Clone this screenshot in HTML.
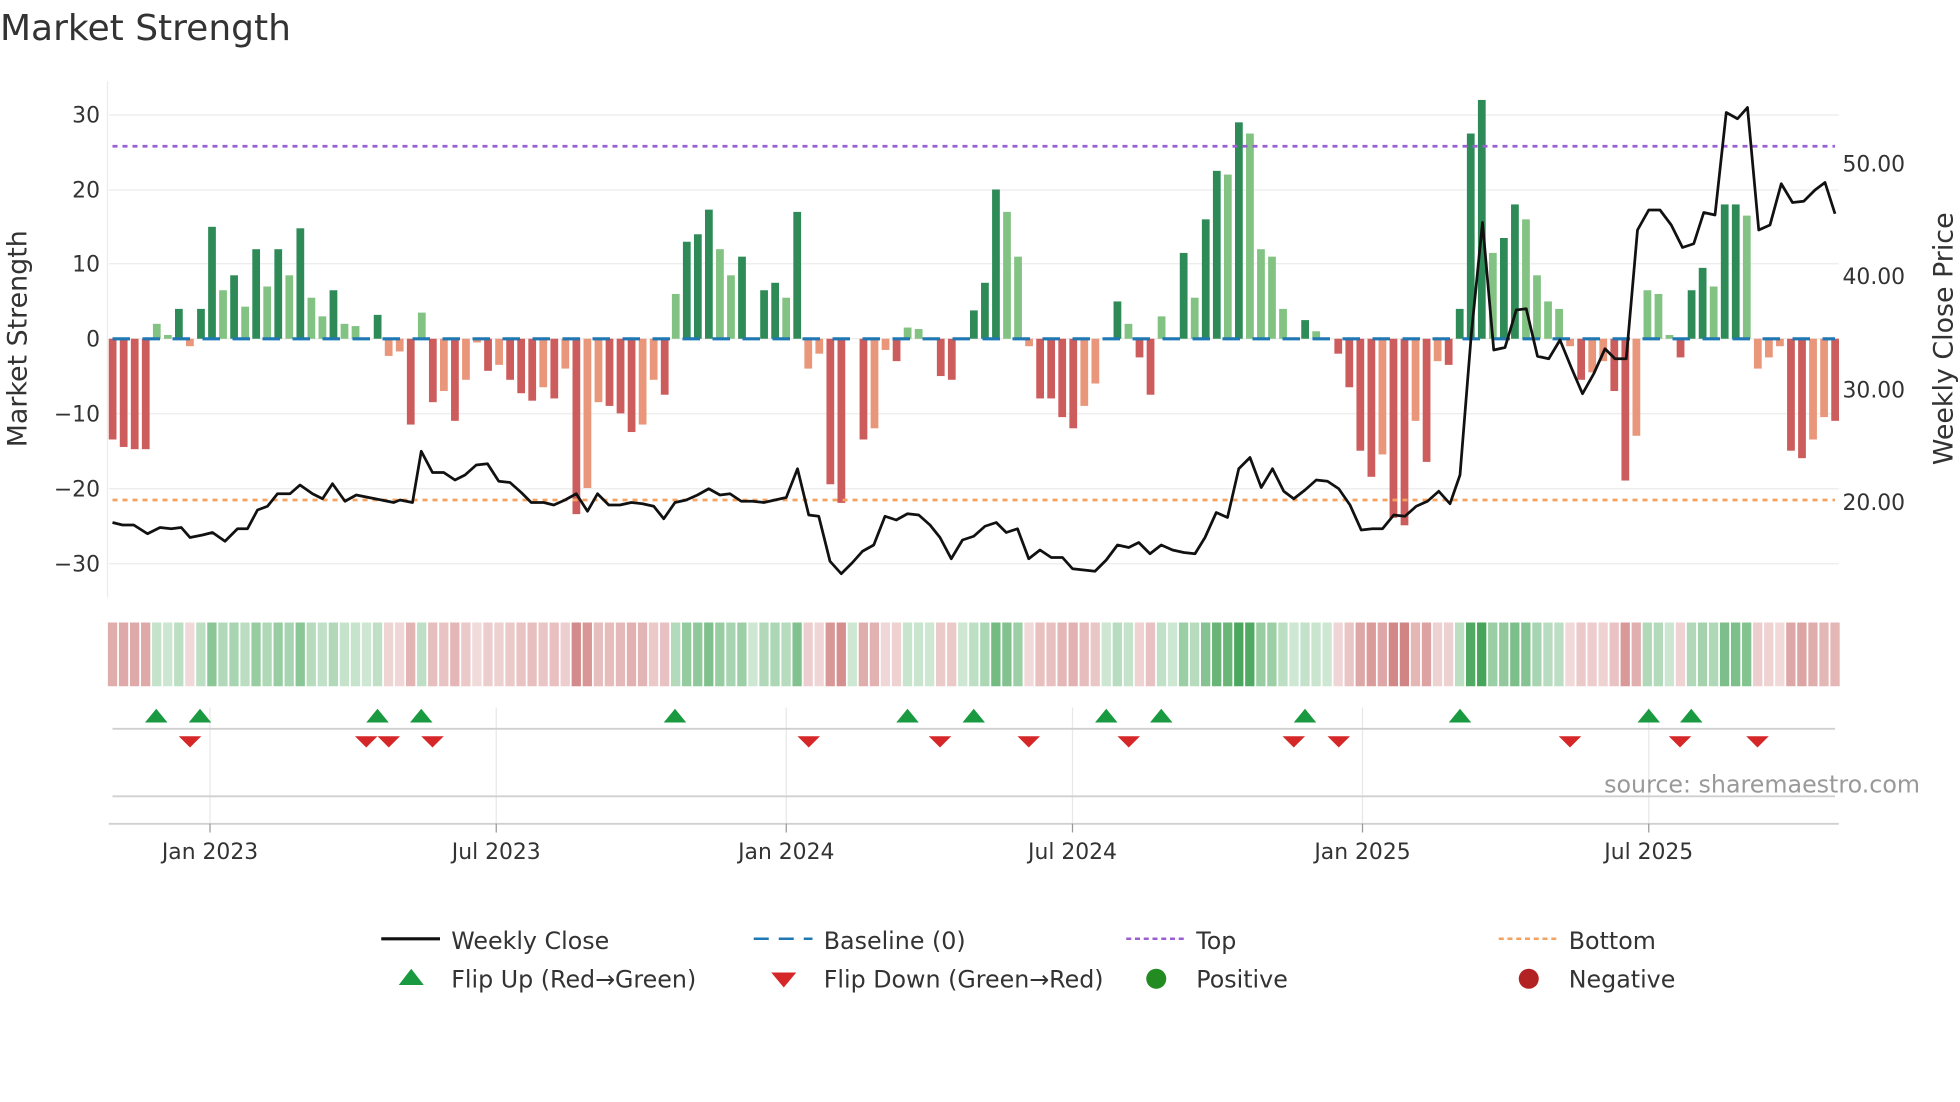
<!DOCTYPE html>
<html><head><meta charset="utf-8"><style>
html,body{margin:0;padding:0;background:#fff;width:1960px;height:1102px;overflow:hidden}
svg{display:block}
text{font-family:"DejaVu Sans","Liberation Sans",sans-serif;fill:#333}
</style></head><body>
<svg id="s" width="1960" height="1102" viewBox="0 0 1568 881.6" xmlns="http://www.w3.org/2000/svg">
<text x="0" y="32" font-size="28.8">Market Strength</text>
<g stroke="#ececec" stroke-width="1">
<line x1="87" x2="1471" y1="92" y2="92"/><line x1="87" x2="1471" y1="152" y2="152"/><line x1="87" x2="1471" y1="211" y2="211"/><line x1="87" x2="1471" y1="271" y2="271"/><line x1="87" x2="1471" y1="331" y2="331"/><line x1="87" x2="1471" y1="391" y2="391"/><line x1="87" x2="1471" y1="451" y2="451"/>
<line x1="86" x2="86" y1="65" y2="478"/>
</g>
<g font-size="17.5" text-anchor="end">
<text x="80" y="98">30</text><text x="80" y="158">20</text><text x="80" y="217">10</text><text x="80" y="277">0</text><text x="80" y="337">−10</text><text x="80" y="397">−20</text><text x="80" y="457">−30</text>
</g>
<g font-size="17.5">
<text x="1474" y="137">50.00</text><text x="1474" y="227">40.00</text><text x="1474" y="318">30.00</text><text x="1474" y="408">20.00</text>
</g>
<text font-size="21.5" transform="translate(21,271) rotate(-90)" text-anchor="middle">Market Strength</text>
<text font-size="21.5" transform="translate(1562,271) rotate(-90)" text-anchor="middle">Weekly Close Price</text>
<g id="bars"></g>
<line x1="90" x2="1468" y1="271" y2="271" stroke="#1f77b4" stroke-width="2.5" stroke-dasharray="14 10"/>
<line x1="90" x2="1468" y1="117" y2="117" stroke="#9b5fd4" stroke-width="2.2" stroke-dasharray="4 4"/>
<line x1="90" x2="1468" y1="400" y2="400" stroke="#f4a261" stroke-width="2.2" stroke-dasharray="4 4"/>
<polyline fill="none" stroke="#111" stroke-width="2.2" stroke-linejoin="round" points="90,418 98,420 107,420 118,427 128,422 137,423 145,422 152,430 162,428 170,426 180,433 190,423 198,423 206,408 214,405 222,395 232,395 240,388 250,395 258,399 266,387 276,401 285,396 300,399 315,402 320,400 330,402 337,361 346,378 355,378 364,384 372,380 381,372 390,371 399,385 408,386 417,394 425,402 435,402 443,404 452,400 461,395 470,409 478,395 487,404 496,404 505,402 514,403 523,405 531,415 540,402 549,400 558,396 567,391 576,396 584,395 593,401 602,401 611,402 620,400 629,398 638,375 647,412 655,413 664,449 673,459 682,450 690,441 699,436 708,413 717,416 726,411 735,412 744,420 752,430 761,447 770,432 779,429 788,421 797,418 805,426 814,423 823,447 832,440 841,446 850,446 858,455 867,456 876,457 885,448 894,436 903,438 911,434 920,443 929,436 938,440 947,442 956,443 964,430 973,410 982,414 991,375 1000,366 1009,390 1018,375 1027,393 1035,399 1044,392 1053,384 1062,385 1071,391 1080,404 1089,424 1098,423 1106,423 1115,412 1124,413 1133,405 1142,401 1151,393 1160,403 1168,380 1177,268 1186,178 1195,280 1204,278 1213,248 1221,247 1230,285 1239,287 1248,272 1257,294 1266,315 1275,299 1284,279 1292,287 1301,287 1310,184 1319,168 1328,168 1337,180 1346,198 1355,195 1363,170 1372,172 1381,90 1390,95 1398,86 1407,184 1416,180 1425,147 1434,162 1443,161 1452,152 1460,146 1468,171"/>
<g id="heat"></g>
<g stroke="#e8e8e8" stroke-width="1">
<line x1="168" x2="168" y1="566" y2="659"/><line x1="397" x2="397" y1="566" y2="659"/><line x1="629" x2="629" y1="566" y2="659"/><line x1="858" x2="858" y1="566" y2="659"/><line x1="1090" x2="1090" y1="566" y2="659"/><line x1="1319" x2="1319" y1="566" y2="659"/>
</g>
<g stroke="#d0d0d0" stroke-width="1.5">
<line x1="90" x2="1468" y1="583" y2="583"/><line x1="90" x2="1468" y1="637" y2="637"/><line x1="87" x2="1471" y1="659" y2="659"/>
</g>
<g stroke="#999" stroke-width="1">
<line x1="168" x2="168" y1="659" y2="666"/><line x1="397" x2="397" y1="659" y2="666"/><line x1="629" x2="629" y1="659" y2="666"/><line x1="858" x2="858" y1="659" y2="666"/><line x1="1090" x2="1090" y1="659" y2="666"/><line x1="1319" x2="1319" y1="659" y2="666"/>
</g>
<g id="tri"></g>
<text x="1536" y="634" font-size="19" text-anchor="end" style="fill:#999">source: sharemaestro.com</text>
<g font-size="17.5" text-anchor="middle">
<text x="168" y="687">Jan 2023</text><text x="397" y="687">Jul 2023</text><text x="629" y="687">Jan 2024</text><text x="858" y="687">Jul 2024</text><text x="1090" y="687">Jan 2025</text><text x="1319" y="687">Jul 2025</text>
</g>
<g font-size="19">
<line x1="305" x2="352" y1="751" y2="751" stroke="#111" stroke-width="2.5"/>
<text x="361" y="759">Weekly Close</text>
<line x1="603" x2="650" y1="751" y2="751" stroke="#1f77b4" stroke-width="2" stroke-dasharray="12 8"/>
<text x="659" y="759">Baseline (0)</text>
<line x1="901" x2="948" y1="751" y2="751" stroke="#9b5fd4" stroke-width="2" stroke-dasharray="4 3"/>
<text x="957" y="759">Top</text>
<line x1="1199" x2="1246" y1="751" y2="751" stroke="#f4a261" stroke-width="2" stroke-dasharray="4 3"/>
<text x="1255" y="759">Bottom</text>
<polygon points="319,788 329,775 339,788" fill="#1a9a40"/>
<text x="361" y="790">Flip Up (Red→Green)</text>
<polygon points="617,778 637,778 627,790" fill="#d62728"/>
<text x="659" y="790">Flip Down (Green→Red)</text>
<circle cx="925" cy="783" r="8" fill="#228b22"/>
<text x="957" y="790">Positive</text>
<circle cx="1223" cy="783" r="8" fill="#b22222"/>
<text x="1255" y="790">Negative</text>
</g>
</svg>
<script>
var v=[-13.5,-14.5,-14.8,-14.8,2,0.5,4,-1,4,15,6.5,8.5,4.3,12,7,12,8.5,14.8,5.5,3,6.5,2,1.7,0,3.2,-2.3,-1.7,-11.5,3.5,-8.5,-7,-11,-5.5,-0.5,-4.3,-3.5,-5.5,-7.3,-8.3,-6.5,-8,-4,-23.5,-20,-8.5,-9,-10,-12.5,-11.5,-5.5,-7.5,6,13,14,17.3,12,8.5,11,0,6.5,7.5,5.5,17,-4,-2,-19.5,-22,0,-13.5,-12,-1.5,-3,1.5,1.3,0,-5,-5.5,0,3.8,7.5,20,17,11,-1,-8,-8,-10.5,-12,-9,-6,0,5,2,-2.5,-7.5,3,0,11.5,5.5,16,22.5,22,29,27.5,12,11,4,0,2.5,1,0,-2,-6.5,-15,-18.5,-15.5,-24,-25,-11,-16.5,-3,-3.5,4,27.5,32,11.5,13.5,18,16,8.5,5,4,-1,-5.5,-4.5,-3,-7,-19,-13,6.5,6,0.5,-2.5,6.5,9.5,7,18,18,16.5,-4,-2.5,-1,-15,-16,-13.5,-10.5,-11];
var ns="http://www.w3.org/2000/svg",n=v.length,dx=(1468-90)/(n-1);
function el(t,a,p){var e=document.createElementNS(ns,t);for(var k in a)e.setAttribute(k,a[k]);p.appendChild(e);}
var B=document.getElementById('bars'),H=document.getElementById('heat');
for(var i=0;i<n;i++){var x=90+i*dx,val=v[i],prev=i?v[i-1]:0,h=Math.abs(val)*5.97;
var up=Math.abs(val)>=Math.abs(prev);
var c=val>=0?(up?'#2e8b57':'#82c282'):(up?'#cd5c5c':'#e9967a');
if(h>0.3)el('rect',{x:x-3,y:val>=0?271-h:271,width:6.2,height:h,fill:c},B);
var t=Math.min(Math.abs(val)/30,1),hc;
if(val>=0){var a=0.25+0.7*t;hc='rgba(60,160,80,'+a+')';}else{var a=0.2+0.6*t;hc='rgba(190,80,80,'+a+')';}
el('rect',{x:x-4.4+0.7,y:498,width:dx-1.4,height:51,fill:hc},H);}
var T=document.getElementById('tri');
[125,160,302,337,540,726,779,885,929,1044,1168,1319,1353].forEach(function(x){el('polygon',{points:(x-9)+',578 '+x+',567 '+(x+9)+',578',fill:'#1a9a40'},T);});
[152,293,311,346,647,752,823,903,1035,1071,1256,1344,1406].forEach(function(x){el('polygon',{points:(x-9)+',589 '+(x+9)+',589 '+x+',598',fill:'#d62728'},T);});
</script>
</body></html>
